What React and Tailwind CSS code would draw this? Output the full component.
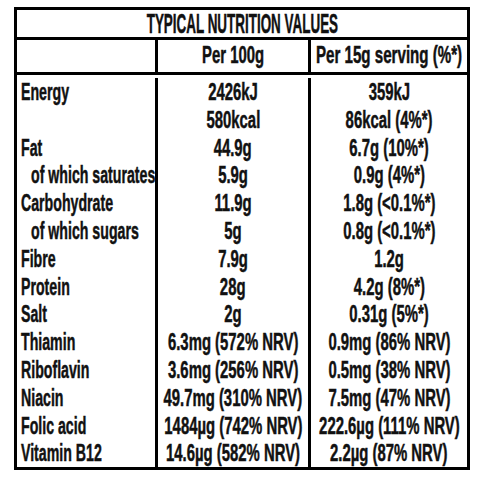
import React from "react";

// Nutrition panel: three columns under a full-width title row.
const rows = [
  { label: "Energy", per100: "2426kJ", serving: "359kJ" },
  { label: "", per100: "580kcal", serving: "86kcal (4%*)" },
  { label: "Fat", per100: "44.9g", serving: "6.7g (10%*)" },
  { label: "of which saturates", sub: true, per100: "5.9g", serving: "0.9g (4%*)" },
  { label: "Carbohydrate", per100: "11.9g", serving: "1.8g (<0.1%*)" },
  { label: "of which sugars", sub: true, per100: "5g", serving: "0.8g (<0.1%*)" },
  { label: "Fibre", per100: "7.9g", serving: "1.2g" },
  { label: "Protein", per100: "28g", serving: "4.2g (8%*)" },
  { label: "Salt", per100: "2g", serving: "0.31g (5%*)" },
  { label: "Thiamin", per100: "6.3mg (572% NRV)", serving: "0.9mg (86% NRV)" },
  { label: "Riboflavin", per100: "3.6mg (256% NRV)", serving: "0.5mg (38% NRV)" },
  { label: "Niacin", per100: "49.7mg (310% NRV)", serving: "7.5mg (47% NRV)" },
  { label: "Folic acid", per100: "1484µg (742% NRV)", serving: "222.6µg (111% NRV)" },
  { label: "Vitamin B12", per100: "14.6µg (582% NRV)", serving: "2.2µg (87% NRV)" },
];

function Centered({ children }) {
  return (
    <div className="flex justify-center h-[27.8px]">
      <span className="shrink-0 whitespace-nowrap scale-x-[0.62]">{children}</span>
    </div>
  );
}

export default function App() {
  return (
    <div
      className="w-[480px] h-[480px] bg-white text-[#111] font-bold overflow-hidden pt-[7px] pl-[14px] [-webkit-text-stroke:0.5px_#111]"
      style={{ fontFamily: '"Liberation Sans", Arial, sans-serif' }}
    >
      <div className="w-[456px] border-[3px] border-black">
        {/* title */}
        <div className="h-[30px] border-b-[3px] border-black flex justify-center text-[28px] leading-[27px]">
          <span className="shrink-0 whitespace-nowrap scale-x-[0.48]">TYPICAL NUTRITION VALUES</span>
        </div>

        {/* column heads */}
        <div className="flex h-[35px] border-b-[3px] border-black text-[24px] leading-[30px]">
          <div className="w-[141px] shrink-0 border-r-[3px] border-black" />
          <div className="w-[153px] shrink-0 border-r-[3px] border-black flex justify-center">
            <span className="shrink-0 whitespace-nowrap scale-x-[0.62]">Per 100g</span>
          </div>
          <div className="flex-1 min-w-0 flex justify-center">
            <span className="shrink-0 whitespace-nowrap scale-x-[0.63]">Per 15g serving (%*)</span>
          </div>
        </div>

        {/* values */}
        <div className="flex text-[24px] leading-[27.8px] pt-[3px]">
          <div className="w-[141px] shrink-0 border-r-[3px] border-black pl-[4px]">
            {rows.map((r, i) => (
              <div key={i} className={`h-[27.8px] whitespace-nowrap ${r.sub ? "pl-[10px]" : ""}`}>
                <span className="inline-block origin-left scale-x-[0.59]">{r.label}</span>
              </div>
            ))}
          </div>
          <div className="w-[153px] shrink-0 border-r-[3px] border-black">
            {rows.map((r, i) => (
              <Centered key={i}>{r.per100}</Centered>
            ))}
          </div>
          <div className="flex-1 min-w-0">
            {rows.map((r, i) => (
              <Centered key={i}>{r.serving}</Centered>
            ))}
          </div>
        </div>
      </div>
    </div>
  );
}
